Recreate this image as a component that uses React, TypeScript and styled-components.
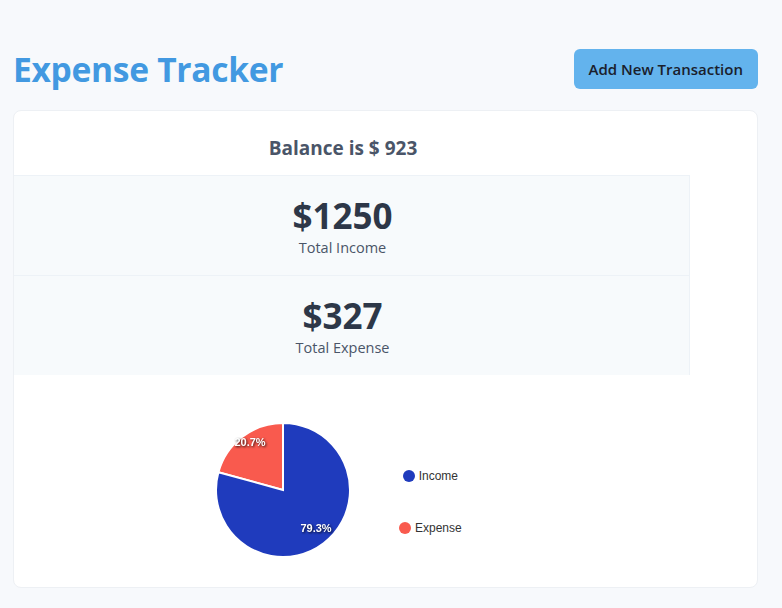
import React from "react";
import styled, { createGlobalStyle } from "styled-components";

const GlobalStyle = createGlobalStyle`
  html, body {
    margin: 0;
    padding: 0;
    background: #f7f9fc;
    font-family: "Open Sans", "Noto Sans", sans-serif;
  }
`;

const Page = styled.div`
  padding: 49px 24px 20px 13px;
  box-sizing: border-box;
  min-height: 608px;
`;

const Header = styled.header`
  display: flex;
  justify-content: space-between;
  align-items: center;
  height: 40px;
  margin-bottom: 21px;
`;

const Title = styled.h1`
  margin: 0;
  font-size: 33.6px;
  font-weight: 700;
  color: #4299e1;
  letter-spacing: -0.3px;
`;

const AddButton = styled.button`
  height: 40px;
  padding: 0 15px;
  border: none;
  border-radius: 6px;
  background: #63b3ed;
  color: #1a202c;
  font-family: inherit;
  font-size: 15px;
  font-weight: 600;
  cursor: pointer;
`;

const Card = styled.section`
  background: #fff;
  border: 1px solid #edf0f4;
  border-radius: 8px;
  height: 478px;
  box-sizing: border-box;
  overflow: hidden;
`;

const Balance = styled.h2`
  margin: 0;
  height: 64px;
  width: 676px;
  display: flex;
  align-items: center;
  justify-content: center;
  padding: 10px 18px 0 0;
  box-sizing: border-box;
  font-size: 19px;
  font-weight: 700;
  color: #4a5568;
`;

const StatBox = styled.div`
  width: 676px;
  height: 100px;
  box-sizing: border-box;
  padding-right: 18px;
  background: #f7fafc;
  border-top: 1px solid #edf2f7;
  border-right: 1px solid #edf2f7;
  display: flex;
  flex-direction: column;
  align-items: center;
  justify-content: center;
  &:last-of-type {
    border-bottom: 1px solid #edf2f7;
  }
`;

const Amount = styled.div`
  font-size: 35px;
  font-weight: 700;
  line-height: 44px;
  color: #2d3748;
`;

const StatLabel = styled.div`
  font-size: 14.5px;
  line-height: 20px;
  color: #4a5568;
`;

const ChartArea = styled.div`
  display: flex;
  align-items: center;
  padding: 45px 0 0 199px;
  gap: 46px;
`;

const Legend = styled.div`
  display: flex;
  flex-direction: column;
  align-items: center;
  gap: 34px;
  margin-top: 24px;
`;

const LegendItem = styled.div`
  display: flex;
  align-items: center;
  gap: 4px;
  font-family: "Liberation Sans", Arial, sans-serif;
  font-size: 12px;
  color: #333;
  height: 18px;
`;

const Dot = styled.span<{ $color: string }>`
  width: 12px;
  height: 12px;
  border-radius: 50%;
  background: ${(p) => p.$color};
`;

const INCOME = 1250;
const EXPENSE = 327;
const BLUE = "#1f3bbd";
const RED = "#f95a4e";

function Pie() {
  const total = INCOME + EXPENSE;
  const frac = EXPENSE / total;
  const c = 70;
  const r = 67;
  const a = -Math.PI / 2 - frac * 2 * Math.PI;
  const ex = c + r * Math.cos(a);
  const ey = c + r * Math.sin(a);
  const pct = (v: number) => ((v / total) * 100).toFixed(1) + "%";
  const labelStyle: React.CSSProperties = {
    filter: "drop-shadow(1px 1px 1px rgba(0,0,0,0.8))",
  };
  return (
    <svg width="140" height="140" viewBox="0 0 140 140">
      <path
        d={`M${c},${c} L${c},${c - r} A${r},${r} 0 0 0 ${ex},${ey} Z`}
        fill={RED}
        stroke="#fff"
        strokeWidth="2"
      />
      <path
        d={`M${c},${c} L${ex},${ey} A${r},${r} 0 1 0 ${c},${c - r} Z`}
        fill={BLUE}
        stroke="#fff"
        strokeWidth="2"
      />
      <g
        fontFamily="Liberation Sans, Arial, sans-serif"
        fontSize="11"
        fontWeight="700"
        fill="#fff"
        textAnchor="middle"
        style={labelStyle}
      >
        <text x={c - 33} y={c - 44}>{pct(EXPENSE)}</text>
        <text x={c + 33} y={c + 42}>{pct(INCOME)}</text>
      </g>
    </svg>
  );
}

export default function App() {
  return (
    <>
      <GlobalStyle />
      <Page>
        <Header>
          <Title>Expense Tracker</Title>
          <AddButton>Add New Transaction</AddButton>
        </Header>
        <Card>
          <Balance>Balance is $ {INCOME - EXPENSE}</Balance>
          <StatBox>
            <Amount>${INCOME}</Amount>
            <StatLabel>Total Income</StatLabel>
          </StatBox>
          <StatBox>
            <Amount>${EXPENSE}</Amount>
            <StatLabel>Total Expense</StatLabel>
          </StatBox>
          <ChartArea>
            <Pie />
            <Legend>
              <LegendItem>
                <Dot $color={BLUE} />
                Income
              </LegendItem>
              <LegendItem>
                <Dot $color={RED} />
                Expense
              </LegendItem>
            </Legend>
          </ChartArea>
        </Card>
      </Page>
    </>
  );
}
